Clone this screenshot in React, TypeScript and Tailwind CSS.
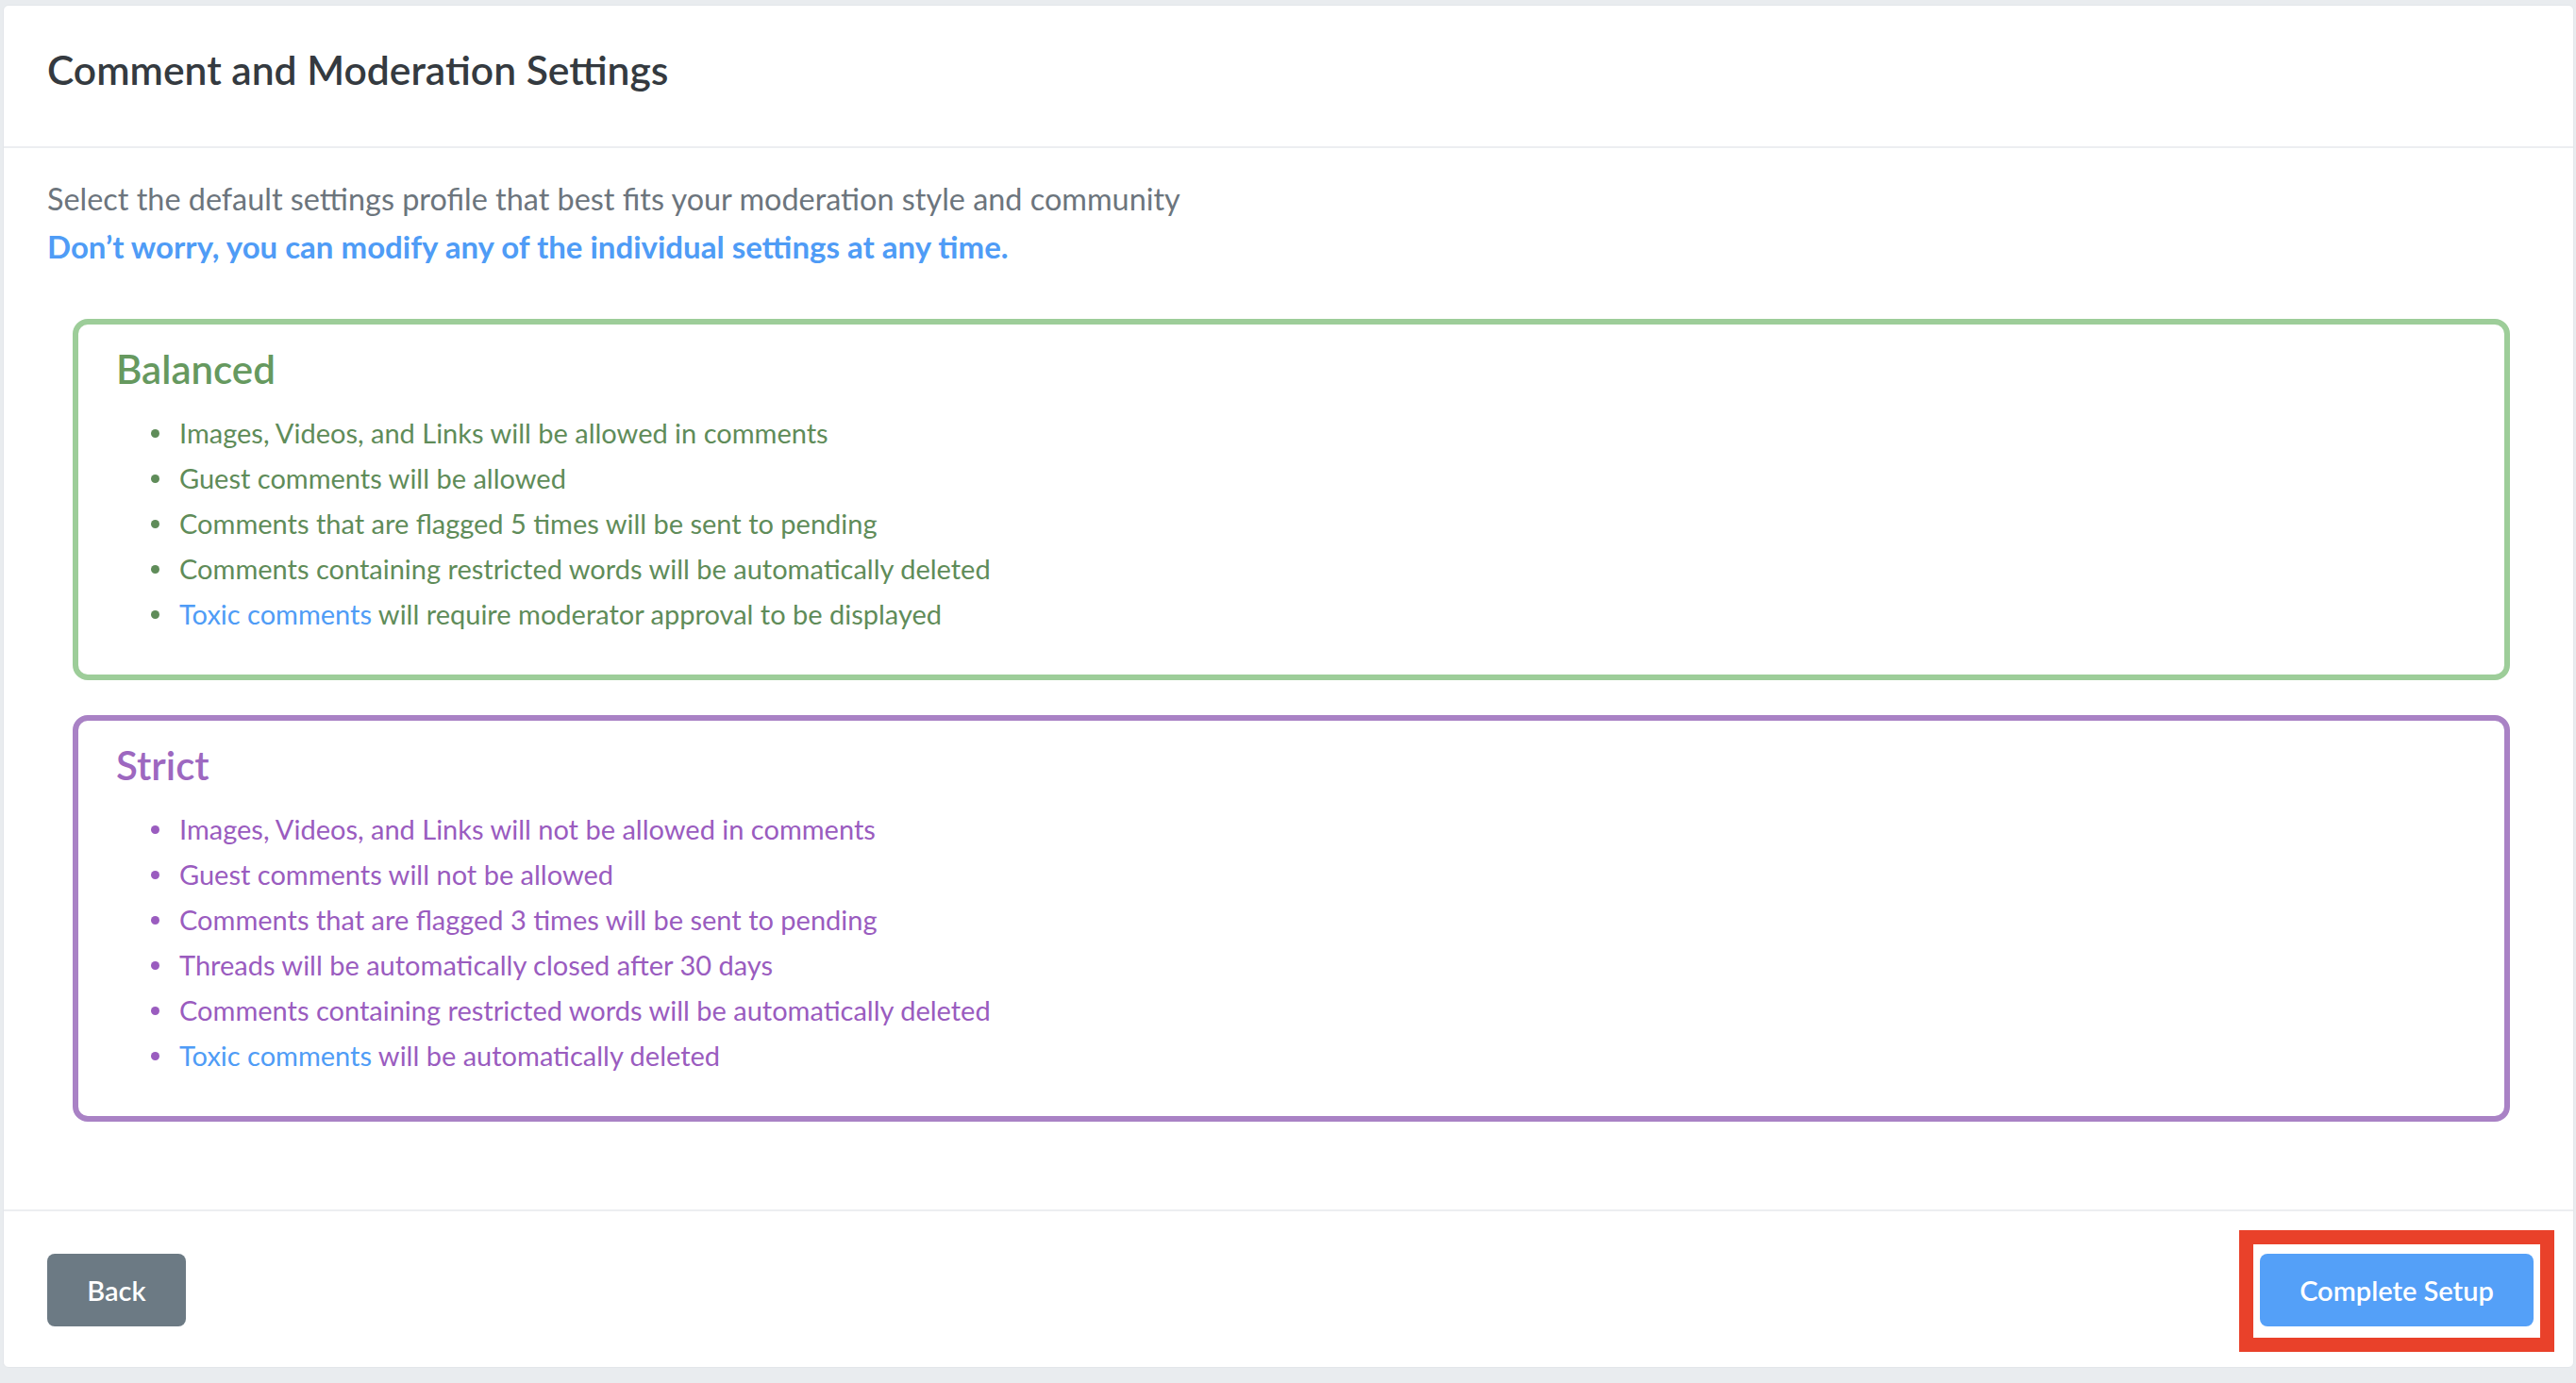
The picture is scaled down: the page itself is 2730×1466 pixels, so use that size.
import React from "react";

type Profile = {
  name: string;
  box: string;
  heading: string;
  text: string;
  bullet: string;
  items: React.ReactNode[];
};

const toxic = <span className="text-[#4f9cf6]">Toxic comments</span>;

const profiles: Profile[] = [
  {
    name: "Balanced",
    box: "border-[#9dcd99]",
    heading: "text-[#66995f]",
    text: "text-[#5f8c59]",
    bullet: "bg-[#5f8c59]",
    items: [
      "Images, Videos, and Links will be allowed in comments",
      "Guest comments will be allowed",
      "Comments that are flagged 5 times will be sent to pending",
      "Comments containing restricted words will be automatically deleted",
      <>{toxic} will require moderator approval to be displayed</>,
    ],
  },
  {
    name: "Strict",
    box: "border-[#a982c5]",
    heading: "text-[#9d68c0]",
    text: "text-[#9a5cbf]",
    bullet: "bg-[#9a5cbf]",
    items: [
      "Images, Videos, and Links will not be allowed in comments",
      "Guest comments will not be allowed",
      "Comments that are flagged 3 times will be sent to pending",
      "Threads will be automatically closed after 30 days",
      "Comments containing restricted words will be automatically deleted",
      <>{toxic} will be automatically deleted</>,
    ],
  },
];

export default function App() {
  return (
    <div
      className="min-h-screen bg-[#e9ecef] pt-[5px] pl-[3px] pr-[2px] pb-[16px]"
      style={{ fontFamily: "Lato, 'Open Sans', sans-serif" }}
    >
      <div className="bg-white rounded-[6px] border border-[#e3e6ea] h-[1445px] flex flex-col">
        {/* header */}
        <div className="h-[151px] px-[46px] pt-[43px] border-b-2 border-[#eceef1]">
          <h1 className="text-[42.6px] font-semibold text-[#343a40] leading-[50px]">
            Comment and Moderation Settings
          </h1>
        </div>

        {/* body */}
        <div className="flex-1 px-[46px] pt-[29px]">
          <p className="text-[32.4px] leading-[50px] text-[#6c757d]">
            Select the default settings profile that best fits your moderation style and community
          </p>
          <p className="text-[33px] leading-[50px] font-bold text-[#4f9cf6]">
            Don’t worry, you can modify any of the individual settings at any time.
          </p>

          <div className="mt-[52px] ml-[27px] mr-[21px] flex flex-col gap-[37px]">
            {profiles.map((p) => (
              <div key={p.name} className={`border-[6px] rounded-[16px] pl-[40px] pt-[22px] pb-[40px] ${p.box}`}>
                <h2 className={`text-[42px] font-semibold leading-[50px] ${p.heading}`}>{p.name}</h2>
                <ul className={`mt-[19px] text-[29px] leading-[48px] ${p.text}`}>
                  {p.items.map((item, i) => (
                    <li key={i} className="flex items-center">
                      <span className={`w-[9px] h-[9px] rounded-full ml-[37px] mr-[21px] ${p.bullet}`} />
                      <span>{item}</span>
                    </li>
                  ))}
                </ul>
              </div>
            ))}
          </div>
        </div>

        {/* footer */}
        <div className="h-[167px] border-t-2 border-[#eceef1] pl-[46px] pr-[42px] pt-[45px] flex items-start justify-between">
          <button className="w-[147px] h-[77px] rounded-[8px] bg-[#6c7a84] text-white text-[29px] font-semibold">
            Back
          </button>
          <div className="relative">
            <button className="w-[290px] h-[77px] rounded-[8px] bg-[#54a0f8] text-white text-[29px] font-semibold">
              Complete Setup
            </button>
            <div className="absolute -left-[22px] -top-[25px] w-[334px] h-[129px] border-[15px] border-[#e9412a] pointer-events-none" />
          </div>
        </div>
      </div>
    </div>
  );
}
